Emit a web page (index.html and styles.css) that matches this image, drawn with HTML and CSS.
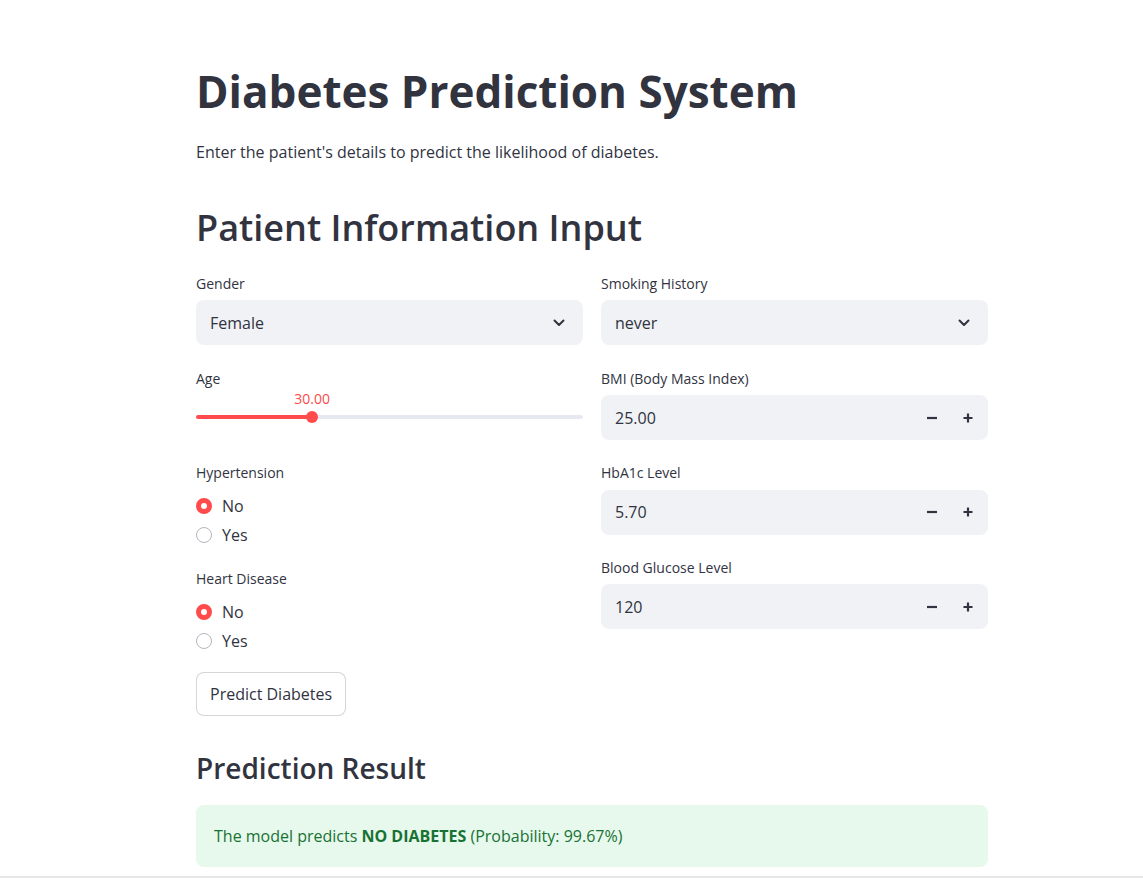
FILE: index.html
```html
<!DOCTYPE html>
<html lang="en">
<head>
<meta charset="utf-8">
<title>Diabetes Prediction System</title>
<link rel="stylesheet" href="styles.css">
</head>
<body>
<div class="app">
  <main class="block">
    <h1 class="title">Diabetes Prediction System</h1>
    <p class="lead">Enter the patient's details to predict the likelihood of diabetes.</p>
    <h2 class="section">Patient Information Input</h2>

    <div class="cols">
      <div class="col">
        <div class="field">
          <div class="lbl">Gender</div>
          <div class="control select">
            <span>Female</span>
            <svg class="chev" width="12" height="8" viewBox="0 0 12 8"><path d="M1.5 1.5 6 6l4.5-4.5" fill="none" stroke="#31333f" stroke-width="2" stroke-linecap="round" stroke-linejoin="round"/></svg>
          </div>
        </div>

        <div class="field">
          <div class="lbl">Age</div>
          <div class="slider">
            <div class="slider-val-row"><span class="slider-val" style="left: 30%">30.00</span></div>
            <div class="track">
              <div class="fill" style="width: 30%"></div>
              <div class="thumb" style="left: 30%"></div>
            </div>
          </div>
        </div>

        <div class="field">
          <div class="lbl">Hypertension</div>
          <div class="radios">
            <div class="radio"><span class="dot on"></span><span>No</span></div>
            <div class="radio"><span class="dot"></span><span>Yes</span></div>
          </div>
        </div>

        <div class="field">
          <div class="lbl">Heart Disease</div>
          <div class="radios">
            <div class="radio"><span class="dot on"></span><span>No</span></div>
            <div class="radio"><span class="dot"></span><span>Yes</span></div>
          </div>
        </div>
      </div>

      <div class="col">
        <div class="field">
          <div class="lbl">Smoking History</div>
          <div class="control select">
            <span>never</span>
            <svg class="chev" width="12" height="8" viewBox="0 0 12 8"><path d="M1.5 1.5 6 6l4.5-4.5" fill="none" stroke="#31333f" stroke-width="2" stroke-linecap="round" stroke-linejoin="round"/></svg>
          </div>
        </div>

        <div class="field">
          <div class="lbl">BMI (Body Mass Index)</div>
          <div class="control number">
            <span class="num-val">25.00</span>
            <span class="step"><svg width="12" height="12" viewBox="0 0 12 12"><path d="M1 6h10" stroke="#31333f" stroke-width="2.2"/></svg></span>
            <span class="step"><svg width="12" height="12" viewBox="0 0 12 12"><path d="M1.5 6h9M6 1.5v9" stroke="#31333f" stroke-width="2.2"/></svg></span>
          </div>
        </div>

        <div class="field">
          <div class="lbl">HbA1c Level</div>
          <div class="control number">
            <span class="num-val">5.70</span>
            <span class="step"><svg width="12" height="12" viewBox="0 0 12 12"><path d="M1 6h10" stroke="#31333f" stroke-width="2.2"/></svg></span>
            <span class="step"><svg width="12" height="12" viewBox="0 0 12 12"><path d="M1.5 6h9M6 1.5v9" stroke="#31333f" stroke-width="2.2"/></svg></span>
          </div>
        </div>

        <div class="field">
          <div class="lbl">Blood Glucose Level</div>
          <div class="control number">
            <span class="num-val">120</span>
            <span class="step"><svg width="12" height="12" viewBox="0 0 12 12"><path d="M1 6h10" stroke="#31333f" stroke-width="2.2"/></svg></span>
            <span class="step"><svg width="12" height="12" viewBox="0 0 12 12"><path d="M1.5 6h9M6 1.5v9" stroke="#31333f" stroke-width="2.2"/></svg></span>
          </div>
        </div>
      </div>
    </div>

    <button class="btn" type="button">Predict Diabetes</button>

    <h3 class="sub">Prediction Result</h3>
    <div class="alert">The model predicts <strong>NO DIABETES</strong> (Probability: 99.67%)</div>
  </main>
</div>
</body>
</html>
```

FILE: styles.css
```css
* { box-sizing: border-box; }

html, body {
  margin: 0;
  padding: 0;
  background: #ffffff;
}

body {
  font-family: "Open Sans", "Noto Sans", "Liberation Sans", sans-serif;
  color: #31333f;
  font-size: 16px;
}

.app {
  height: 878px;
  overflow: hidden;
  border-bottom: 2px solid #e6e6e6;
}

.block {
  width: 792px;
  margin-left: 196px;
  padding-top: 65px;
}

.title {
  margin: 0;
  font-size: 44px;
  line-height: 52.8px;
  font-weight: 700;
}

.lead {
  margin: 22px 0 0;
  font-size: 16px;
  line-height: 24px;
}

.section {
  margin: 42px 0 0;
  font-size: 36px;
  line-height: 43.2px;
  font-weight: 600;
}

.cols {
  margin-top: 22.4px;
  display: flex;
  gap: 18px;
  align-items: flex-start;
}

.col {
  flex: 1 1 0;
  display: flex;
  flex-direction: column;
  gap: 20.67px;
}

.lbl {
  height: 24px;
  display: flex;
  align-items: center;
  font-size: 14px;
}

.control {
  margin-top: 5px;
  height: 45px;
  background: #f0f2f6;
  border-radius: 8px;
  display: flex;
  align-items: center;
}

.select {
  padding: 0 18px 0 14px;
  justify-content: space-between;
}

.number {
  padding: 0 2px 0 14px;
}

.num-val { flex: 1; }

.step {
  width: 36px;
  height: 100%;
  display: flex;
  align-items: center;
  justify-content: center;
}

.slider {
  height: 50px;
}

.slider-val-row {
  position: relative;
  height: 18px;
}

.slider-val {
  position: absolute;
  top: 0;
  transform: translateX(-50%);
  font-size: 14px;
  line-height: 18px;
  color: #ff4b4b;
}

.track {
  position: relative;
  margin-top: 7px;
  height: 4px;
  background: #e6e9ef;
  border-radius: 2px;
}

.fill {
  height: 4px;
  background: #ff4b4b;
  border-radius: 2px;
}

.thumb {
  position: absolute;
  top: -4px;
  width: 12px;
  height: 12px;
  margin-left: -6px;
  border-radius: 50%;
  background: #ff4b4b;
}

.radios {
  padding-top: 7px;
  margin-bottom: -3.5px;
}

.radio {
  height: 29px;
  display: flex;
  align-items: center;
  gap: 10px;
}

.dot {
  width: 16px;
  height: 16px;
  border-radius: 50%;
  border: 1px solid #b4b6bd;
  background: #fff;
}

.dot.on {
  border: 5px solid #ff4b4b;
  background: #fff;
}

.btn {
  margin-top: 20px;
  height: 44px;
  padding: 0 13px;
  font: inherit;
  color: #31333f;
  background: #fff;
  border: 1px solid rgba(49, 51, 63, 0.2);
  border-radius: 8px;
}

.sub {
  margin: 36px 0 0;
  font-size: 28px;
  line-height: 33.6px;
  font-weight: 600;
}

.alert {
  margin-top: 19px;
  padding: 19px 18px;
  background: #e7f8ec;
  color: #177233;
  border-radius: 8px;
  line-height: 24px;
}

.alert strong { font-weight: 700; }
```
